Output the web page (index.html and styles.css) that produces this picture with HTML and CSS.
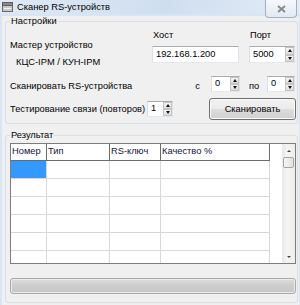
FILE: index.html
```html
<!DOCTYPE html>
<html>

<head>
    <meta http-equiv="Content-Type" content="text/html;charset=UTF-8">
    <title>Сканер RS-устройств</title>
    <link rel="stylesheet" href="styles.css">
</head>

<body>
    <div class="titlebar">
        <svg class="icon" width="11" height="10" viewBox="0 0 11 10">
            <rect x="0.5" y="3.5" width="10" height="6" fill="#c8c8c8" stroke="#6b6b6b" />
            <rect x="0.5" y="0.5" width="10" height="3" fill="#8a8a8a" stroke="#5e5e5e" />
            <line x1="2" y1="6.5" x2="9" y2="6.5" stroke="#f4f4f4" />
        </svg>
        <span class="title">Сканер RS-устройств</span>
        <div class="close">
            <svg width="9" height="8" viewBox="0 0 9 8">
                <path d="M1 1 L8 7 M8 1 L1 7" stroke="#8a8a8a" stroke-width="2" />
            </svg>
        </div>
    </div>

    <div class="client">
        <fieldset class="group settings">
            <legend>Настройки</legend>

            <div class="row1">
                <div class="master">
                    <p class="master-lbl">Мастер устройство</p>
                    <p class="master-val">КЦС-IPM / КУН-IPM</p>
                </div>
                <div class="host">
                    <p class="top-lbl">Хост</p>
                    <div class="textbox">192.168.1.200</div>
                </div>
                <div class="port">
                    <p class="top-lbl">Порт</p>
                    <div class="spin">
                        <span class="val">5000</span>
                        <span class="arrows"><i class="up"></i><i class="down"></i></span>
                    </div>
                </div>
            </div>

            <div class="row2">
                <p class="lbl">Сканировать RS-устройства</p>
                <div class="range from">
                    <p class="lbl">с</p>
                    <div class="spin small">
                        <span class="val">0</span>
                        <span class="arrows"><i class="up"></i><i class="down"></i></span>
                    </div>
                </div>
                <div class="range to">
                    <p class="lbl">по</p>
                    <div class="spin small">
                        <span class="val">0</span>
                        <span class="arrows"><i class="up"></i><i class="down"></i></span>
                    </div>
                </div>
            </div>

            <div class="row3">
                <p class="lbl">Тестирование связи (повторов)</p>
                <div class="spin">
                    <span class="val">1</span>
                    <span class="arrows"><i class="up"></i><i class="down"></i></span>
                </div>
                <span></span>
                <button class="btn">Сканировать</button>
            </div>
        </fieldset>

        <fieldset class="group results">
            <legend>Результат</legend>

            <div class="grid">
                <div class="cells">
                    <div class="hdr">
                        <div>Номер</div>
                        <div>Тип</div>
                        <div>RS-ключ</div>
                        <div>Качество %</div>
                    </div>
                    <div class="r"><div class="sel"></div><div></div><div></div><div></div></div>
                    <div class="r"><div></div><div></div><div></div><div></div></div>
                    <div class="r"><div></div><div></div><div></div><div></div></div>
                    <div class="r"><div></div><div></div><div></div><div></div></div>
                    <div class="r"><div></div><div></div><div></div><div></div></div>
                    <div class="r"><div></div><div></div><div></div><div></div></div>
                </div>
                <div class="scroll">
                    <span class="sb-btn"><i class="sb-up"></i></span>
                    <span class="thumb"></span>
                    <span class="track"></span>
                    <span class="sb-btn"><i class="sb-down"></i></span>
                </div>
            </div>

            <div class="progress"></div>
        </fieldset>
    </div>
</body>

</html>
```

FILE: styles.css
```css
* {
    box-sizing: border-box;
    margin: 0;
    padding: 0;
}

body {
    width: 300px;
    height: 305px;
    overflow: hidden;
    background: #d9e5f3;
    font-family: "Liberation Sans", Arial, sans-serif;
    font-size: 9.3px;
    color: #000;
}

/* title bar */

.titlebar {
    position: relative;
    height: 14px;
    display: flex;
    align-items: center;
    padding-left: 2px;
    background: linear-gradient(to right, #dfe9f5, #cfdeef 55%, #e2ebf6);
}

.icon {
    margin-right: 4px;
}

.title {
    line-height: 11px;
}

.close {
    position: absolute;
    top: 0;
    right: 3px;
    z-index: 2;
    width: 32px;
    height: 18px;
    border: 1px solid #a3b0c1;
    border-top: 0;
    border-radius: 0 0 4px 4px;
    background: linear-gradient(#f5f8fc, #e3eaf3);
    display: flex;
    align-items: center;
    justify-content: center;
}

/* client area */

.client {
    height: 291px;
    margin: 0 1px 0 2px;
    padding: 0 1px 0 3px;
    background: #f0f0f0;
}

.group {
    border: 1px solid #d5dfe5;
    border-radius: 3px;
    padding: 3px 1px 3px 4px;
}

.group legend {
    line-height: 11px;
    padding: 0 1px;
}

.settings {
    margin-top: 2px;
}

.results {
    margin-top: 6px;
    padding-top: 2px;
    padding-bottom: 8px;
}

p {
    line-height: 11px;
}

.row1 {
    display: grid;
    grid-template-columns: 142px 97px 46px;
}

.master-lbl {
    margin-top: 10px;
}

.master-val {
    margin-top: 6px;
    padding-left: 6px;
}

.host {
    padding-right: 10px;
}

.top-lbl {
    margin-bottom: 5px;
    padding-left: 1px;
}

.textbox {
    height: 17px;
    padding-left: 3px;
    line-height: 15px;
    background: #fff;
    border: 1px solid;
    border-color: #abadb3 #e2e3ea #e3e9ef #dbdfe6;
}

.spin {
    height: 17px;
    display: flex;
    background: #fff;
    border: 1px solid;
    border-color: #abadb3 #e2e3ea #e3e9ef #dbdfe6;
}

.spin .val {
    flex: 1;
    padding-left: 3px;
    line-height: 14px;
}

.arrows {
    width: 9px;
    display: flex;
    flex-direction: column;
}

.arrows i {
    flex: 1;
    display: flex;
    align-items: center;
    justify-content: center;
    background: linear-gradient(#f7f7f7, #dcdcdc);
    border: 1px solid #c3c3c3;
}

.arrows i::after {
    content: "";
    border-left: 2.5px solid transparent;
    border-right: 2.5px solid transparent;
}

.arrows .up::after {
    border-bottom: 3px solid #111;
}

.arrows .down::after {
    border-top: 3px solid #111;
}

.row2 {
    margin-top: 8px;
    display: grid;
    grid-template-columns: 142px 97px 46px;
    align-items: center;
}

.row2 .lbl {
    padding-top: 4px;
}

.spin.small {
    height: 16px;
}

.spin.small .val {
    line-height: 12px;
}

.range {
    display: flex;
    align-items: center;
}

.from {
    justify-content: flex-end;
    padding-right: 9px;
}

.from .spin {
    width: 29px;
    margin-left: 11px;
}

.to {
    justify-content: space-between;
}

.to .spin {
    width: 28px;
}

.row3 {
    margin-top: 6px;
    display: grid;
    grid-template-columns: 137px 26px 1fr 87px;
    align-items: center;
}

.row3 .spin {
    height: 16px;
}

.row3 .spin .val {
    line-height: 13px;
}

.btn {
    height: 22px;
    font: inherit;
    color: #000;
    border: 1px solid #707070;
    border-radius: 3px;
    background: linear-gradient(#f2f2f2 0%, #ebebeb 50%, #dddddd 51%, #cfcfcf 100%);
    box-shadow: inset 0 0 0 1px #fbfbfb;
}

/* results grid */

.grid {
    height: 121px;
    display: flex;
    background: #fff;
    border: 1px solid #7d7d7d;
}

.cells {
    flex: 1;
    overflow: hidden;
}

.hdr,
.r {
    display: grid;
    grid-template-columns: 36px 63px 51px 109px;
}

.hdr div {
    height: 17px;
    padding: 2px 0 0 1px;
    color: #14143a;
    border-right: 1px solid #6b6b6b;
    border-bottom: 1px solid #6b6b6b;
}

.r div {
    height: 18px;
    border-right: 1px solid #d8d8d8;
    border-bottom: 1px solid #d8d8d8;
}

.r .sel {
    background: #3399ff;
}

.scroll {
    width: 13px;
    display: flex;
    flex-direction: column;
    align-items: center;
    background: linear-gradient(to right, #e9e9e9, #f4f4f4 40%, #eeeeee);
}

.sb-btn {
    height: 13px;
    width: 100%;
    display: flex;
    align-items: center;
    justify-content: center;
}

.sb-btn i {
    border-left: 2px solid transparent;
    border-right: 2px solid transparent;
}

.sb-up {
    border-bottom: 2px solid #444;
}

.sb-down {
    border-top: 2px solid #444;
}

.thumb {
    width: 11px;
    height: 11px;
    border: 1px solid #a5a5a5;
    border-radius: 2px;
    background: linear-gradient(to right, #f6f6f6, #e2e2e2);
}

.track {
    flex: 1;
}

.progress {
    margin-top: 14px;
    height: 16px;
    border: 1px solid #a9a9a9;
    border-radius: 3px;
    background: linear-gradient(#dddddd, #cdcdcd 45%, #c7c7c7);
    box-shadow: inset 0 0 0 1px #ececec;
}
```
